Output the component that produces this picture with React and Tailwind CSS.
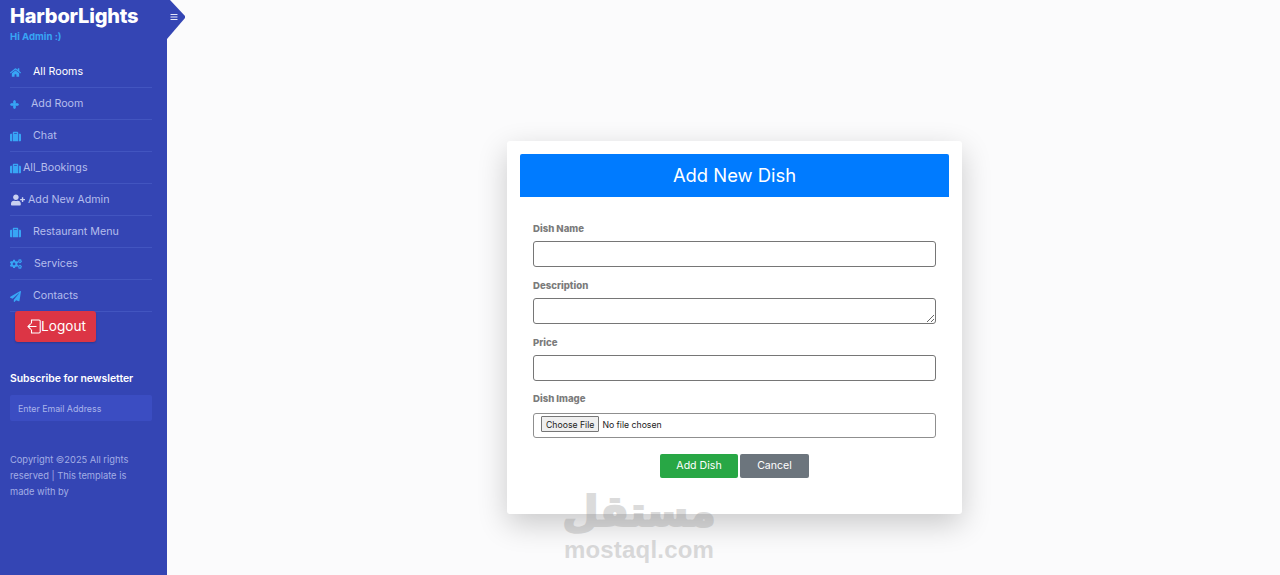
import { FaHome, FaPlus, FaSuitcase, FaUserPlus, FaCogs, FaPaperPlane, FaBars } from "react-icons/fa";

const NAV = [
  { label: "All Rooms", icon: FaHome, size: 11, gap: "ml-[12px]", active: true },
  { label: "Add Room", icon: FaPlus, size: 9, gap: "ml-[12px]", heavy: true },
  { label: "Chat", icon: FaSuitcase, size: 11, gap: "ml-[12px]" },
  { label: "All_Bookings", icon: FaSuitcase, size: 11, gap: "ml-[2px]" },
  { label: "Add New Admin", icon: FaUserPlus, size: 14, gap: "ml-[3px]", pad: "pl-px", iconColor: "text-[#c9d0f0]" },
  { label: "Restaurant Menu", icon: FaSuitcase, size: 11, gap: "ml-[12px]" },
  { label: "Services", icon: FaCogs, size: 12, gap: "ml-[12px]" },
  { label: "Contacts", icon: FaPaperPlane, size: 11, gap: "ml-[12px]" },
];

const FONT = "font-['Inter','Liberation_Sans',sans-serif]";

function Field({ label, labelClass = "mb-[5px]", children }) {
  return (
    <div>
      <label className={`block text-[9.6px] leading-[14px] font-extrabold text-[#7b7b7b] ${labelClass}`}>{label}</label>
      {children}
    </div>
  );
}

export default function App() {
  return (
    <div className={`flex h-[575px] overflow-hidden bg-[#fbfbfc] ${FONT}`}>
      {/* Sidebar */}
      <aside className="relative w-[167px] shrink-0 bg-[#3445b4] pl-[10px] pr-[15px]">
        <svg className="absolute left-[167px] top-0" width="18" height="40" viewBox="0 0 18 40">
          <polygon points="0,0 3,0 18,16 18,18 0,39" fill="#3445b4" />
        </svg>
        <button className="absolute left-[170px] top-[13px] text-[#e4e7fa]">
          <FaBars size={8} />
        </button>

        <h1 className="pt-px text-[20px] leading-[30px] font-extrabold text-white whitespace-nowrap tracking-[-0.2px]">HarborLights</h1>
        <p className="text-[9.6px] leading-[12px] font-bold text-[#38a5f5]">Hi Admin :)</p>

        <nav className="mt-[13px]">
          {NAV.map((item) => {
            const Icon = item.icon;
            return (
              <a
                key={item.label}
                className={`flex items-center h-[32px] pt-px border-b border-[#4255c0] text-[10.7px] ${item.pad || ""} ${item.active ? "text-white" : "text-[#b4bdec]"}`}
              >
                <Icon
                  size={item.size}
                  stroke="currentColor"
                  strokeWidth={item.heavy ? 50 : 0}
                  className={`shrink-0 ${item.iconColor || "text-[#38a5f5]"}`}
                />
                <span className={item.gap}>{item.label}</span>
              </a>
            );
          })}
        </nav>

        <button className="flex items-center -mt-px ml-[5px] w-[81px] h-[31px] pl-[2px] justify-center rounded-[3px] bg-[#dc3545] text-white text-[13.6px] shadow-[0_1px_2px_rgba(0,0,0,0.2)]">
          <svg width="14" height="15" viewBox="0 0 14 15" fill="none" stroke="currentColor" strokeWidth="1.1" className="shrink-0">
            <path d="M4.5 4.5V1h7.5a1.2 1.2 0 0 1 1.2 1.2v10.6A1.2 1.2 0 0 1 12 14H4.5v-3.5" />
            <path d="M9.5 7.5H1M3.8 4.7L1 7.5l2.8 2.8" />
          </svg>
          Logout
        </button>

        <h3 className="mt-[29px] text-[10.4px] leading-[16px] font-semibold text-white whitespace-nowrap">Subscribe for newsletter</h3>
        <input
          placeholder="Enter Email Address"
          className="mt-[8px] block w-[142px] h-[26px] px-[8px] rounded-[2px] bg-[#3b4dc2] text-[8.8px] placeholder:text-[#aab4ea] outline-none"
        />
        <p className="mt-[31px] w-[130px] text-[9.3px] leading-[16px] text-[#a3aee5]">
          Copyright ©2025 All rights reserved | This template is made with by
        </p>
      </aside>

      {/* Main */}
      <main className="relative flex-1 flex items-center justify-center pl-[22px] pt-[80px]">
        <div className="relative w-[455px] h-[373px] p-[13px] rounded-[3px] bg-white shadow-[0_10px_30px_rgba(0,0,0,0.2)]">
          <div className="h-[43px] pt-px flex items-center justify-center rounded-t-[2px] bg-[#007bff] text-white text-[18.4px]">Add New Dish</div>
          <form className="px-[13px] pt-[25px] flex flex-col gap-[12px]">
            <Field label="Dish Name">
              <input className="block w-full h-[26px] rounded-[3px] border border-[#767676] bg-white" />
            </Field>
            <Field label="Description">
              <textarea className="block w-full h-[26px] rounded-[3px] border border-[#767676] bg-white" />
            </Field>
            <Field label="Price">
              <input className="block w-full h-[26px] rounded-[3px] border border-[#767676] bg-white" />
            </Field>
            <Field label="Dish Image" labelClass="-mt-px mb-[7px]">
              <input
                type="file"
                className="block w-full h-[25px] px-[7px] py-[2px] rounded-[3px] border border-[#8f8f8f] bg-white text-[8.7px] leading-[16px] text-[#222] file:h-[16px] file:px-[4px] file:mr-[3px] file:border file:border-[#767676] file:bg-[#efefef] file:rounded-[1px]"
              />
            </Field>
            <div className="flex justify-center gap-[2px] mt-[4px]">
              <button type="button" className="w-[78px] h-[24px] rounded-[2px] bg-[#28a745] text-white text-[10.6px]">Add Dish</button>
              <button type="button" className="w-[69px] h-[24px] rounded-[2px] bg-[#6c757d] text-white text-[10.6px]">Cancel</button>
            </div>
          </form>
        </div>

        {/* Watermark */}
        <div className="absolute left-[397px] top-[486px] w-[150px] flex flex-col items-center pointer-events-none text-[#8a8a8a] opacity-30">
          <span className="font-['DejaVu_Sans',sans-serif] font-bold text-[42px] leading-[52px] [-webkit-text-stroke:2px_#8a8a8a]">مستقل</span>
          <span className="font-['Liberation_Sans',sans-serif] font-bold text-[24px] leading-[24px] tracking-[0.2px]">mostaql.com</span>
        </div>
      </main>
    </div>
  );
}
